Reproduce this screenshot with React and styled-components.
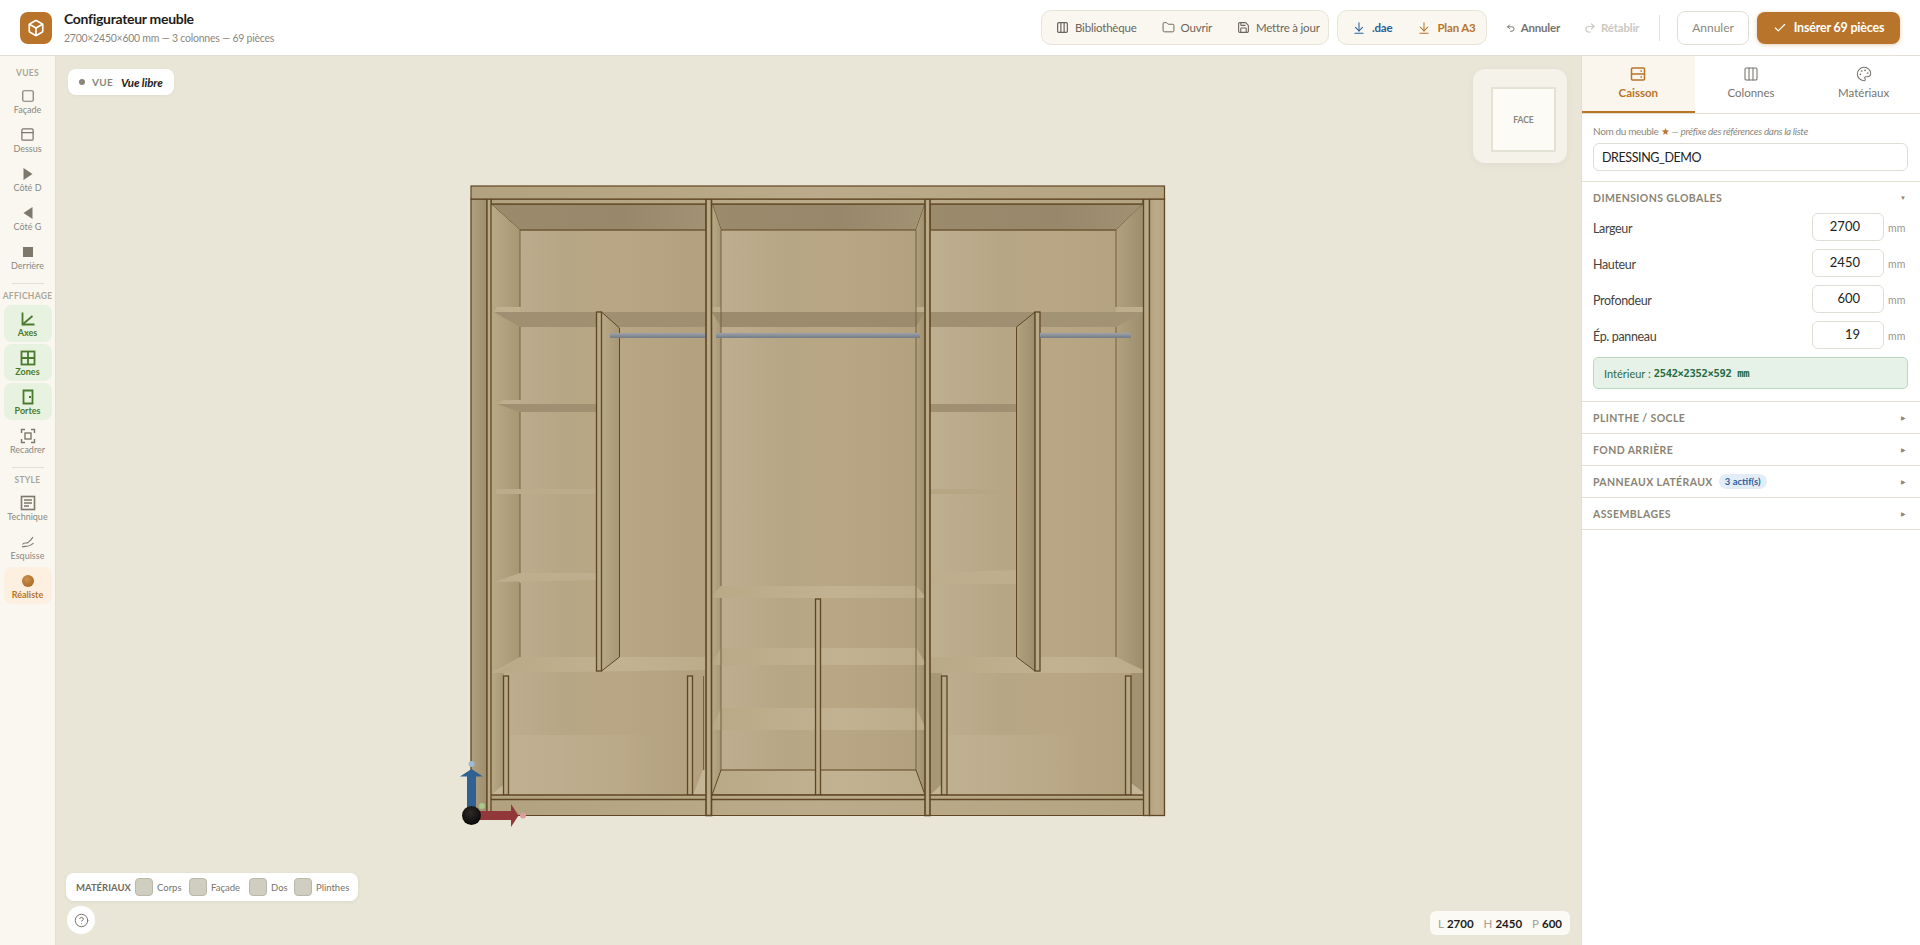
import React from 'react';
import styled, { createGlobalStyle } from 'styled-components';
import {
  Box, Square, PanelTop, Columns3, Folder, Save, ArrowDownToLine, Undo2, Redo2, Check, Palette, CircleHelp,
} from 'lucide-react';

const ORANGE = '#b8742a';
const BLUE = '#2b5f9e';
const GREEN = '#4a7a2e';
const LINE = '#5f4724';

const GlobalStyle = createGlobalStyle`
  html, body { margin: 0; padding: 0; height: 100%; }
  body { font-family: Lato, "Open Sans", sans-serif; color: #222; background: #fff; overflow: hidden; }
  * { box-sizing: border-box; }
`;

const Page = styled.div`
  width: 100%;
  height: 100vh;
  display: flex;
  flex-direction: column;
  overflow: hidden;
`;

/* ---------- header ---------- */
const Header = styled.header`
  height: 56px;
  flex: none;
  display: flex;
  align-items: center;
  padding: 0 20px;
  background: #fff;
  border-bottom: 1px solid #e3dfd3;
`;
const Logo = styled.div`
  width: 32px;
  height: 32px;
  border-radius: 8px;
  background: ${ORANGE};
  color: #fff;
  display: flex;
  align-items: center;
  justify-content: center;
  margin-right: 12px;
`;
const TitleBlock = styled.div`
  display: flex;
  flex-direction: column;
  gap: 3px;
  margin-top: -1px;
`;
const Title = styled.div`
  font-size: 14px;
  font-weight: 700;
  line-height: 18px;
  letter-spacing: -0.3px;
  color: #1d1c1a;
`;
const Subtitle = styled.div`
  font-size: 10.5px;
  line-height: 14px;
  letter-spacing: -0.25px;
  color: #8b8880;
`;
const Spacer = styled.div`
  flex: 1;
`;
const ToolGroup = styled.div`
  width: ${p => p.$w}px;
  height: 35px;
  display: flex;
  align-items: center;
  gap: 25px;
  padding-left: 14px;
  margin-right: 8px;
  background: #faf7f0;
  border: 1px solid #e9e4d7;
  border-radius: 10px;
`;
const ToolButton = styled.button`
  display: flex;
  align-items: center;
  gap: 6px;
  border: none;
  background: none;
  padding: 0;
  font: inherit;
  font-size: 11.5px;
  letter-spacing: -0.2px;
  font-weight: ${p => (p.$color ? 700 : 400)};
  color: ${p => p.$color || '#6a665d'};
  white-space: nowrap;
`;
const History = styled.button`
  width: ${p => p.$w}px;
  display: flex;
  align-items: center;
  gap: 5px;
  border: none;
  background: none;
  padding: 0;
  margin-left: ${p => p.$ml}px;
  font: inherit;
  font-size: 11.5px;
  letter-spacing: -0.2px;
  font-weight: 700;
  color: ${p => (p.$off ? '#cbc9c2' : '#77746c')};
`;
const Divider = styled.div`
  width: 1px;
  height: 26px;
  background: #e3dfd3;
  margin: 0 17px 0 19px;
`;
const CancelButton = styled.button`
  width: 72px;
  height: 34px;
  border: 1px solid #e0ddd4;
  border-radius: 8px;
  background: #fff;
  font: inherit;
  font-size: 12px;
  color: #8b8880;
  margin-right: 8px;
`;
const InsertButton = styled.button`
  width: 143px;
  height: 32px;
  border: none;
  border-radius: 8px;
  background: ${ORANGE};
  color: #fff;
  font: inherit;
  font-size: 12.5px;
  letter-spacing: -0.2px;
  font-weight: 700;
  display: flex;
  align-items: center;
  justify-content: center;
  gap: 7px;
  box-shadow: 0 1px 4px rgba(184, 116, 42, 0.35);
`;

/* ---------- body ---------- */
const Body = styled.div`
  flex: 1;
  display: flex;
  min-height: 0;
`;
const Sidebar = styled.nav`
  width: 56px;
  flex: none;
  padding-top: 10px;
  background: #faf7f0;
  border-right: 1px solid #e3dfd3;
  display: flex;
  flex-direction: column;
  align-items: center;
`;
const SideLabel = styled.div`
  height: 12px;
  line-height: 14px;
  margin-bottom: 4px;
  font-size: 8.5px;
  font-weight: 700;
  letter-spacing: 0.3px;
  color: #aaa69a;
`;
const SideRule = styled.div`
  width: 32px;
  height: 1px;
  flex: none;
  background: #e3dfd3;
  margin: 6px 0 5px;
`;
const tones = {
  green: { bg: '#e8f2e0', fg: GREEN },
  orange: { bg: '#fdf0e0', fg: ORANGE },
};
const SideItem = styled.button`
  width: 48px;
  height: 37px;
  flex: none;
  margin-bottom: 2px;
  padding: 5px 0 0;
  border: none;
  border-radius: 8px;
  background: ${p => (p.$tone ? tones[p.$tone].bg : 'transparent')};
  color: ${p => (p.$tone ? tones[p.$tone].fg : '#7d786c')};
  display: flex;
  flex-direction: column;
  align-items: center;
  font: inherit;
`;
const SideIcon = styled.span`
  height: 17px;
  display: flex;
  align-items: center;
  justify-content: center;
`;
const SideText = styled.span`
  font-size: 9px;
  line-height: 12px;
  font-weight: ${p => (p.$tone ? 700 : 400)};
  color: ${p => (p.$tone ? tones[p.$tone].fg : '#8b8880')};
`;

const Canvas = styled.main`
  flex: 1;
  position: relative;
  background: #e9e6d8;
  display: flex;
  align-items: center;
  justify-content: center;
  min-width: 0;
`;
const ViewPill = styled.div`
  position: absolute;
  left: 12px;
  top: 13px;
  height: 26px;
  width: 106px;
  padding-left: 11px;
  display: flex;
  align-items: center;
  border-radius: 8px;
  background: #fff;
  box-shadow: 0 1px 3px rgba(0, 0, 0, 0.04);
`;
const Dot = styled.span`
  width: 6px;
  height: 6px;
  border-radius: 50%;
  background: #8a867b;
  margin-right: 7px;
`;
const ViewKey = styled.span`
  font-size: 10px;
  font-weight: 700;
  letter-spacing: 0.3px;
  color: #8a867b;
  margin-right: 8px;
`;
const ViewValue = styled.span`
  font-size: 11.5px;
  font-weight: 700;
  font-style: italic;
  letter-spacing: -0.1px;
  color: #1d1c1a;
`;
const CubeWidget = styled.div`
  position: absolute;
  right: 14px;
  top: 13px;
  width: 94px;
  height: 94px;
  padding: 18px 11px 11px 18px;
  border-radius: 12px;
  background: #f4f2e9;
  box-shadow: 0 2px 8px rgba(0, 0, 0, 0.04);
`;
const CubeFace = styled.div`
  width: 100%;
  height: 100%;
  display: flex;
  align-items: center;
  justify-content: center;
  background: #fcfbf6;
  border: 2px solid #e4e1d5;
  font-size: 8.5px;
  font-weight: 700;
  color: #8a867b;
`;
const MaterialBar = styled.div`
  position: absolute;
  left: 10px;
  bottom: 44px;
  height: 28px;
  width: 292px;
  padding-left: 10px;
  display: flex;
  align-items: center;
  border-radius: 8px;
  background: #fff;
  box-shadow: 0 1px 4px rgba(0, 0, 0, 0.06);
`;
const MaterialTitle = styled.span`
  width: 59px;
  font-size: 9.5px;
  font-weight: 700;
  color: #6f6b61;
`;
const Swatch = styled.span`
  width: 18px;
  height: 18px;
  border-radius: 4px;
  background: #d0cdc1;
  border: 1px solid #b9b6aa;
  margin-right: 4px;
`;
const MaterialName = styled.span`
  width: ${p => p.$w}px;
  font-size: 9.5px;
  color: #77746c;
`;
const HelpButton = styled.button`
  position: absolute;
  left: 11px;
  bottom: 11px;
  width: 28px;
  height: 28px;
  padding: 0;
  border: none;
  border-radius: 50%;
  background: #fff;
  color: #77746c;
  display: flex;
  align-items: center;
  justify-content: center;
`;
const DimPill = styled.div`
  position: absolute;
  right: 11px;
  bottom: 10px;
  width: 140px;
  height: 24px;
  display: flex;
  align-items: center;
  justify-content: center;
  gap: 10px;
  border-radius: 6px;
  background: #fbfaf5;
  font-size: 11.5px;
`;
const DimItem = styled.span`
  display: flex;
  gap: 3px;
`;
const DimKey = styled.span`
  color: #a5a296;
`;
const DimValue = styled.b`
  font-weight: 700;
  color: #1d1c1a;
`;

/* ---------- right panel ---------- */
const Panel = styled.aside`
  width: 339px;
  flex: none;
  background: #fff;
  border-left: 1px solid #e3dfd3;
  display: flex;
  flex-direction: column;
`;
const Tabs = styled.div`
  display: grid;
  grid-template-columns: repeat(3, 1fr);
  height: 58px;
  border-bottom: 1px solid #e3dfd3;
`;
const Tab = styled.button`
  height: 57px;
  padding: 10px 0 0;
  border: none;
  border-bottom: 2px solid ${p => (p.$active ? ORANGE : 'transparent')};
  background: ${p => (p.$active ? '#faf6ee' : 'transparent')};
  color: ${p => (p.$active ? ORANGE : '#77746c')};
  display: flex;
  flex-direction: column;
  align-items: center;
  gap: 4px;
  font: inherit;
  font-size: 11.5px;
  font-weight: ${p => (p.$active ? 700 : 400)};
`;
const NameBlock = styled.div`
  padding: 10px 12px 10px 11px;
  border-bottom: 1px solid #e3dfd3;
`;
const NameLabel = styled.div`
  font-size: 10px;
  line-height: 14px;
  letter-spacing: -0.35px;
  color: #8b8880;
  margin-bottom: 5px;
  em { font-style: italic; }
  b { color: ${ORANGE}; font-weight: 400; }
`;
const NameInput = styled.input`
  display: block;
  width: 100%;
  height: 28px;
  padding: 0 8px;
  border: 1px solid #e0ddd4;
  border-radius: 6px;
  font: inherit;
  font-size: 12.5px;
  letter-spacing: -0.4px;
  color: #222;
  outline: none;
`;
const Section = styled.section`
  border-bottom: 1px solid #e3dfd3;
  padding: 0 12px 0 11px;
`;
const SectionHead = styled.div`
  height: 31px;
  display: flex;
  align-items: center;
`;
const SectionTitle = styled.span`
  font-size: 10.5px;
  font-weight: 700;
  letter-spacing: 0.4px;
  color: #8a8474;
`;
const Caret = styled.span`
  margin-left: auto;
  margin-right: 2px;
  font-size: 6px;
  color: #8a8474;
`;
const Badge = styled.span`
  margin-left: 6px;
  height: 15px;
  padding: 0 6px;
  display: flex;
  align-items: center;
  border-radius: 8px;
  background: #e3edf8;
  color: ${BLUE};
  font-size: 9.5px;
  font-weight: 700;
`;
const Row = styled.div`
  height: 28px;
  margin-bottom: 8px;
  display: flex;
  align-items: center;
`;
const RowLabel = styled.label`
  flex: 1;
  padding-top: 3px;
  font-size: 12.5px;
  letter-spacing: -0.35px;
  color: #45433e;
`;
const NumInput = styled.input`
  width: 72px;
  height: 28px;
  padding: 0 23px 2px 0;
  border: 1px solid #e0ddd4;
  border-radius: 6px;
  text-align: right;
  font: inherit;
  font-size: 13px;
  color: #222;
  outline: none;
`;
const Unit = styled.span`
  width: 24px;
  padding: 2px 0 0 4px;
  font-size: 10.5px;
  color: #9a978c;
`;
const InfoBox = styled.div`
  height: 32px;
  margin-bottom: 12px;
  padding-left: 10px;
  display: flex;
  align-items: center;
  gap: 3px;
  background: #e6f2e8;
  border: 1px solid #b9d8c2;
  border-radius: 5px;
  font-size: 11px;
  color: #2f6b45;
`;
const Mono = styled.span`
  font-family: "DejaVu Sans Mono", "Liberation Mono", monospace;
  font-size: 10.5px;
  font-weight: 700;
  letter-spacing: -0.35px;
  color: #256b43;
`;

/* ---------- hand drawn icons ---------- */
const Glyph = ({ size = 16, children, sw = 2, ...rest }) => (
  <svg width={size} height={size} viewBox="0 0 16 16" fill="none" stroke="currentColor" strokeWidth={sw} {...rest}>
    {children}
  </svg>
);
const TriRight = () => <Glyph><path d="M3.5 2 L12.5 8 L3.5 14Z" fill="currentColor" stroke="none" /></Glyph>;
const TriLeft = () => <Glyph><path d="M12.5 2 L3.5 8 L12.5 14Z" fill="currentColor" stroke="none" /></Glyph>;
const BackSquare = () => <Glyph><rect x="3" y="3" width="10" height="10" fill="currentColor" stroke="none" /></Glyph>;
const Axes = () => <Glyph sw={1.8}><path d="M2.5 1.5V13.5H14.5" /><path d="M2.5 13.5L12.5 5" /></Glyph>;
const Zones = () => <Glyph sw={1.8}><rect x="1.5" y="1.5" width="13" height="13" /><path d="M8 1.5V14.5M1.5 8H14.5" /></Glyph>;
const Door = () => <Glyph sw={1.8}><path d="M3.5 1.5H12.5V14.5H3.5Z" /><path d="M10 7V9" strokeWidth="2" /></Glyph>;
const Frame = () => (
  <Glyph sw={1.4}>
    <path d="M1.5 5V1.5H5M11 1.5H14.5V5M14.5 11V14.5H11M5 14.5H1.5V11" />
    <rect x="5" y="5" width="6" height="6" />
  </Glyph>
);
const Sheet = () => <Glyph sw={1.6}><rect x="1.5" y="1.5" width="13" height="13" /><path d="M4 5H12M4 8H12M4 11H9" /></Glyph>;
const Sketch = () => (
  <Glyph sw={1.1}><path d="M2.5 10.5C4 7.5 6.5 10 8 8.5S11 6.5 13 3" /><path d="M2 13C4.5 11.5 9 14 13.5 9" /></Glyph>
);
const Ball = () => (
  <svg width="16" height="16" viewBox="0 0 16 16">
    <defs>
      <radialGradient id="ball" cx="40%" cy="35%" r="70%">
        <stop offset="0" stopColor="#cf9150" />
        <stop offset="1" stopColor="#aa6a28" />
      </radialGradient>
    </defs>
    <circle cx="8" cy="8" r="6" fill="url(#ball)" />
  </svg>
);
const Drawers = () => (
  <Glyph size={16} sw={1.5}><rect x="1.5" y="2" width="13" height="12" rx="1" /><path d="M1.5 8H14.5M10.5 5H12M10.5 11H12" /></Glyph>
);

/* ---------- wardrobe drawing ---------- */
const Poly = ({ d, fill, line }) => <polygon points={d} fill={fill} stroke={line ? LINE : 'none'} strokeWidth="1" />;
const Bar = ({ x, y, w, h, fill = 'url(#wood)', sw = 1.3 }) => (
  <rect x={x} y={y} width={w} height={h} fill={fill} stroke={LINE} strokeWidth={sw} />
);
const Rod = ({ x, w }) => <rect x={x} y="333" width={w} height="5" fill="url(#rod)" />;

const backs = [
  [491, 230, 215, 565],
  [712, 230, 213, 565],
  [930, 230, 214, 565],
];
const surfaces = [
  // ceilings
  ['491,204 706,204 706,230 520,230', 'url(#under)', true],
  ['712,204 925,204 916,230 721,230', 'url(#under)', true],
  ['930,204 1143,204 1116,230 930,230', 'url(#under)', true],
  // side walls
  ['491,204 520,230 520,657 491,673', 'url(#wallL)'],
  ['712,204 721,230 721,770 712,795', 'url(#wallL)'],
  ['925,204 916,230 916,770 925,795', 'url(#wallR)'],
  ['1143,204 1116,230 1116,657 1143,673', 'url(#wallR)'],
  ['491,673 504,673 504,795 491,795', 'url(#wallL)'],
  ['930,673 942,673 942,795 930,795', '#a89775'],
  ['1131,673 1143,673 1143,795 1131,795', '#a39272'],
  // left column shelves, undersides
  ['494,312 706,312 706,327 520,327', '#a08f71'],
  ['497,404 597,404 597,412 520,412', '#a08f71'],
  ['712,312 925,312 916,327 721,327', '#9c8b6c'],
  ['930,312 1035,312 1017,327 930,327', '#a08f71'],
  ['1040,312 1143,312 1116,327 1040,327', '#a39375'],
  ['930,404 1035,404 1035,412 930,412', '#a08f71'],
  // shelf tops
  ['497,307 520,307 520,312 494,312', '#c0b08f'],
  ['503,400 520,400 520,404 497,404', '#bfae8e'],
  ['712,307 721,307 721,312 712,312', '#bfae8e'],
  ['916,307 925,307 925,312 916,312', '#bfae8e'],
  ['496,489 597,489 597,494 496,494', '#bdac8b'],
  ['930,489 1035,489 1035,494 930,494', '#b7a584'],
  ['1116,307 1143,307 1143,312 1116,312', '#bfae8e'],
  ['1016,400 1035,400 1035,404 1016,404', '#bfae8e'],
  ['520,573 597,573 597,580 495,582', '#bfae8e'],
  ['930,573 1016,570 1035,578 1035,584 930,584', '#bfae8e'],
  ['520,657 706,657 706,670 495,673', 'url(#top)'],
  ['930,657 1116,657 1143,670 1143,673 930,673', 'url(#top)'],
  // centre shelves
  ['721,586 916,586 925,596 925,598 712,598 712,596', 'url(#top)'],
  ['721,648 916,648 925,662 925,665 712,665 712,662', 'url(#top)'],
  ['721,708 916,708 925,727 925,730 712,730 712,727', 'url(#top)'],
  ['721,770 916,770 925,795 712,795', 'url(#top)', true],
  // floors of the side bays
  ['491,795 503,785 503,795', '#c4b596'],
  ['693,795 703,770 706,770 706,795', '#c4b596'],
  ['930,795 941,785 941,795', '#c4b596'],
  ['1131,783 1143,792 1143,795 1131,795', '#c4b596'],
];
const thinLines = [
  'M520 230V307M520 327V400M520 412V489M520 494V573M520 583V657',
  'M721 230V586M916 230V770M721 598V770',
  'M1116 230V307M1116 327V657',
  'M930 230H1116M520 230H706',
  'M703.5 676V770',
];

const DrawingSvg = styled.svg`
  display: block;
  flex: none;
`;

const Wardrobe = () => (
  <DrawingSvg viewBox="458 160 721 681" width="721" height="681">
    <defs>
      <linearGradient id="wood" x1="0" x2="1" y1="0" y2="0">
        <stop offset="0" stopColor="#b3a27f" />
        <stop offset="0.5" stopColor="#bcab8a" />
        <stop offset="1" stopColor="#b5a482" />
      </linearGradient>
      <linearGradient id="back" x1="0" x2="1" y1="0" y2="0">
        <stop offset="0" stopColor="#bfaf91" />
        <stop offset="0.35" stopColor="#b7a685" />
        <stop offset="0.6" stopColor="#b9a684" />
        <stop offset="1" stopColor="#b2a07f" />
      </linearGradient>
      <linearGradient id="glow" x1="0" x2="1" y1="0" y2="0">
        <stop offset="0" stopColor="#bfb091" />
        <stop offset="0.5" stopColor="#bfb091" stopOpacity="0.6" />
        <stop offset="1" stopColor="#bfb091" stopOpacity="0" />
      </linearGradient>
      <linearGradient id="wallL" x1="0" x2="1" y1="0" y2="0">
        <stop offset="0" stopColor="#b9a986" />
        <stop offset="1" stopColor="#a89775" />
      </linearGradient>
      <linearGradient id="wallR" x1="0" x2="1" y1="0" y2="0">
        <stop offset="0" stopColor="#b2a17e" />
        <stop offset="1" stopColor="#9f8e6e" />
      </linearGradient>
      <linearGradient id="under" x1="0" x2="1" y1="0" y2="0">
        <stop offset="0" stopColor="#9b8a6b" />
        <stop offset="0.6" stopColor="#98876a" />
        <stop offset="1" stopColor="#a29274" />
      </linearGradient>
      <linearGradient id="top" x1="0" x2="1" y1="0" y2="0">
        <stop offset="0" stopColor="#baa986" />
        <stop offset="0.6" stopColor="#c2b292" />
        <stop offset="1" stopColor="#bdac8a" />
      </linearGradient>
      <linearGradient id="rod" x1="0" x2="0" y1="0" y2="1">
        <stop offset="0" stopColor="#9ea2a8" />
        <stop offset="1" stopColor="#747a86" />
      </linearGradient>
      <radialGradient id="origin" cx="45%" cy="35%" r="60%">
        <stop offset="0" stopColor="#2b2a26" />
        <stop offset="1" stopColor="#0c0c0b" />
      </radialGradient>
    </defs>

    {backs.map(([x, y, w, h]) => <rect key={x} x={x} y={y} width={w} height={h} fill="url(#back)" />)}
    <rect x="508" y="735" width="150" height="60" fill="url(#glow)" />
    <rect x="947" y="735" width="130" height="60" fill="url(#glow)" />
    {surfaces.map(([d, fill, line]) => <Poly key={d} d={d} fill={fill} line={line} />)}
    <path d={thinLines.join('')} fill="none" stroke="#75603f" strokeWidth="1" />

    {/* open doors */}
    <Poly d="601.5,312 619.5,328 619.5,657 601.5,671" fill="url(#wallL)" line />
    <Bar x={596.5} y={312} w={5} h={359} />
    <Poly d="1035,312 1016.5,327 1016.5,657 1035,671" fill="url(#wallR)" line />
    <Bar x={1035} y={312} w={5} h={359} />

    <Rod x={610} w={96} />
    <Rod x={716} w={204} />
    <Rod x={1040} w={91} />

    {/* uprights of the lower part */}
    <Bar x={503.5} y={676} w={5} h={119} />
    <Bar x={687.5} y={676} w={5} h={119} />
    <Bar x={941.5} y={676} w={5.5} h={119} />
    <Bar x={1125.5} y={676} w={5.5} h={119} />
    <Bar x={815.5} y={599} w={5} h={196} />

    {/* carcass */}
    <rect x="491" y="795" width="652" height="20" fill="url(#wood)" />
    <path d="M491 795H1144M491 799.5H1144" stroke={LINE} strokeWidth="1.3" fill="none" />
    <Bar x={491} y={199} w={652} h={5} />
    <Bar x={471} y={199} w={16} h={616.5} fill="url(#wallR)" />
    <Bar x={487} y={199} w={4} h={616.5} />
    <Bar x={706} y={199} w={5.5} h={616.5} sw={1.6} />
    <Bar x={925} y={199} w={5} h={616.5} sw={1.6} />
    <Bar x={1143.5} y={199} w={6} h={616.5} />
    <Bar x={1149.5} y={199} w={15} h={616.5} />
    <Bar x={471} y={186} w={693.5} h={13} sw={1.2} />
    <path d="M491 815.5H1144" stroke={LINE} strokeWidth="1.2" />

    {/* axis gizmo */}
    <circle cx="471.5" cy="764" r="3" fill="#9dbcd6" />
    <circle cx="482" cy="806" r="3" fill="#a5c98e" />
    <circle cx="523" cy="815.5" r="3" fill="#dc9d9d" />
    <rect x="467" y="776" width="9" height="34" fill="#2f6292" />
    <polygon points="471.5,769 483,776.5 460,776.5" fill="#2f6292" />
    <rect x="476" y="811" width="36" height="9" fill="#92383b" />
    <polygon points="511,804 518.5,815.5 511,827" fill="#92383b" />
    <circle cx="471.5" cy="815.5" r="9.5" fill="url(#origin)" />
  </DrawingSvg>
);

const sideGroups = [
  {
    label: 'VUES',
    items: [
      { text: 'Façade', icon: <Square size={14} strokeWidth={2} /> },
      { text: 'Dessus', icon: <PanelTop size={15} strokeWidth={2} /> },
      { text: 'Côté D', icon: <TriRight /> },
      { text: 'Côté G', icon: <TriLeft /> },
      { text: 'Derrière', icon: <BackSquare /> },
    ],
  },
  {
    label: 'AFFICHAGE',
    items: [
      { text: 'Axes', icon: <Axes />, tone: 'green' },
      { text: 'Zones', icon: <Zones />, tone: 'green' },
      { text: 'Portes', icon: <Door />, tone: 'green' },
      { text: 'Recadrer', icon: <Frame /> },
    ],
  },
  {
    label: 'STYLE',
    items: [
      { text: 'Technique', icon: <Sheet /> },
      { text: 'Esquisse', icon: <Sketch /> },
      { text: 'Réaliste', icon: <Ball />, tone: 'orange' },
    ],
  },
];

const dimensions = [
  ['Largeur', '2700'],
  ['Hauteur', '2450'],
  ['Profondeur', '600'],
  ['Ép. panneau', '19'],
];

const materials = [
  ['Corps', 32],
  ['Façade', 38],
  ['Dos', 23],
  ['Plinthes', 32],
];

export default function App() {
  return (
    <Page>
      <GlobalStyle />
      <Header>
        <Logo><Box size={18} strokeWidth={2.2} /></Logo>
        <TitleBlock>
          <Title>Configurateur meuble</Title>
          <Subtitle>2700×2450×600 mm — 3 colonnes — 69 pièces</Subtitle>
        </TitleBlock>
        <Spacer />
        <ToolGroup $w={288}>
          <ToolButton><Columns3 size={13} strokeWidth={2.2} />Bibliothèque</ToolButton>
          <ToolButton><Folder size={13} strokeWidth={1.8} />Ouvrir</ToolButton>
          <ToolButton><Save size={13} strokeWidth={2} />Mettre à jour</ToolButton>
        </ToolGroup>
        <ToolGroup $w={150}>
          <ToolButton $color={BLUE}><ArrowDownToLine size={14} strokeWidth={1.8} />.dae</ToolButton>
          <ToolButton $color={ORANGE}><ArrowDownToLine size={14} strokeWidth={1.8} />Plan A3</ToolButton>
        </ToolGroup>
        <History $ml={11} $w={54}><Undo2 size={12} strokeWidth={2.4} />Annuler</History>
        <History $ml={24} $w={56} $off><Redo2 size={12} strokeWidth={2.4} />Rétablir</History>
        <Divider />
        <CancelButton>Annuler</CancelButton>
        <InsertButton><Check size={14} strokeWidth={2} />Insérer 69 pièces</InsertButton>
      </Header>

      <Body>
        <Sidebar>
          {sideGroups.map((group, i) => (
            <React.Fragment key={group.label}>
              {i > 0 && <SideRule />}
              <SideLabel>{group.label}</SideLabel>
              {group.items.map(item => (
                <SideItem key={item.text} $tone={item.tone}>
                  <SideIcon>{item.icon}</SideIcon>
                  <SideText $tone={item.tone}>{item.text}</SideText>
                </SideItem>
              ))}
            </React.Fragment>
          ))}
        </Sidebar>

        <Canvas>
          <ViewPill>
            <Dot />
            <ViewKey>VUE</ViewKey>
            <ViewValue>Vue libre</ViewValue>
          </ViewPill>
          <CubeWidget><CubeFace>FACE</CubeFace></CubeWidget>
          <Wardrobe />
          <MaterialBar>
            <MaterialTitle>MATÉRIAUX</MaterialTitle>
            {materials.map(([name, w]) => (
              <React.Fragment key={name}>
                <Swatch />
                <MaterialName $w={w}>{name}</MaterialName>
              </React.Fragment>
            ))}
          </MaterialBar>
          <HelpButton><CircleHelp size={15} strokeWidth={1.6} /></HelpButton>
          <DimPill>
            <DimItem><DimKey>L</DimKey><DimValue>2700</DimValue></DimItem>
            <DimItem><DimKey>H</DimKey><DimValue>2450</DimValue></DimItem>
            <DimItem><DimKey>P</DimKey><DimValue>600</DimValue></DimItem>
          </DimPill>
        </Canvas>

        <Panel>
          <Tabs>
            <Tab $active><Drawers />Caisson</Tab>
            <Tab><Columns3 size={16} strokeWidth={1.6} />Colonnes</Tab>
            <Tab><Palette size={16} strokeWidth={1.6} />Matériaux</Tab>
          </Tabs>
          <NameBlock>
            <NameLabel>Nom du meuble <b>★</b> <em>— préfixe des références dans la liste</em></NameLabel>
            <NameInput defaultValue="DRESSING_DEMO" readOnly />
          </NameBlock>
          <Section>
            <SectionHead>
              <SectionTitle>DIMENSIONS GLOBALES</SectionTitle>
              <Caret>▼</Caret>
            </SectionHead>
            {dimensions.map(([label, value]) => (
              <Row key={label}>
                <RowLabel>{label}</RowLabel>
                <NumInput defaultValue={value} readOnly />
                <Unit>mm</Unit>
              </Row>
            ))}
            <InfoBox>Intérieur : <Mono>2542×2352×592 mm</Mono></InfoBox>
          </Section>
          <Section>
            <SectionHead><SectionTitle>PLINTHE / SOCLE</SectionTitle><Caret>▶</Caret></SectionHead>
          </Section>
          <Section>
            <SectionHead><SectionTitle>FOND ARRIÈRE</SectionTitle><Caret>▶</Caret></SectionHead>
          </Section>
          <Section>
            <SectionHead>
              <SectionTitle>PANNEAUX LATÉRAUX</SectionTitle>
              <Badge>3 actif(s)</Badge>
              <Caret>▶</Caret>
            </SectionHead>
          </Section>
          <Section>
            <SectionHead><SectionTitle>ASSEMBLAGES</SectionTitle><Caret>▶</Caret></SectionHead>
          </Section>
        </Panel>
      </Body>
    </Page>
  );
}
